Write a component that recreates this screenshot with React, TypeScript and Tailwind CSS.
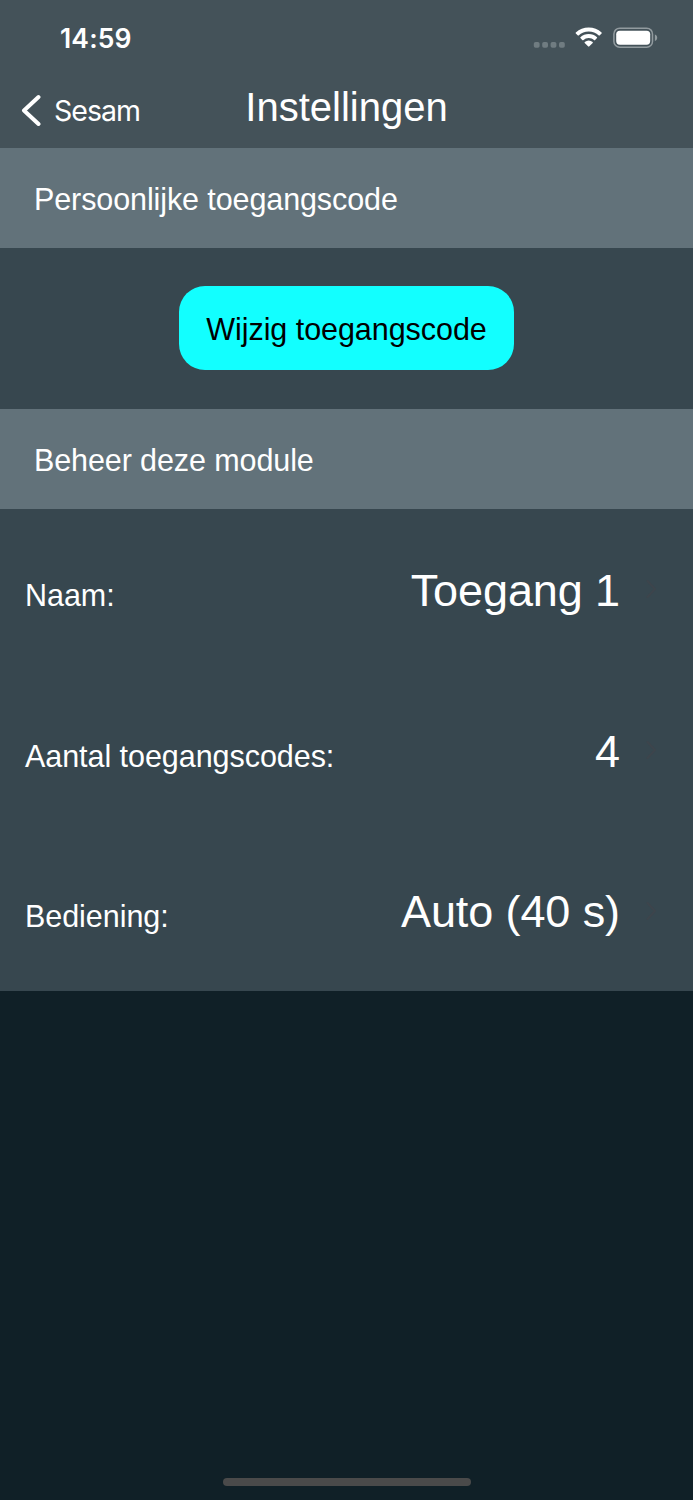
import type { ReactNode } from "react";

type Setting = {
  label: string;
  value: string;
};

const settings: Setting[] = [
  { label: "Naam:", value: "Toegang 1" },
  { label: "Aantal toegangscodes:", value: "4" },
  { label: "Bediening:", value: "Auto (40 s)" }
];

function StatusIcons() {
  return (
    <svg width="126" height="24" viewBox="0 0 126 24" fill="none">
      {/* no cellular signal */}
      <g fill="#707c81">
        <rect x="1.8" y="16" width="5.8" height="5.8" rx="1.8" />
        <rect x="10.2" y="16" width="5.8" height="5.8" rx="1.8" />
        <rect x="18.6" y="16" width="5.8" height="5.8" rx="1.8" />
        <rect x="27" y="16" width="5.8" height="5.8" rx="1.8" />
      </g>
      <g fill="#fff">
        <path d="M56.7 5.5c3.8 0 7.4 1.5 10.1 4 .2.2.5.2.7 0l2.1-2.1c.2-.2.2-.6 0-.8a19 19 0 0 0-25.8 0c-.2.2-.2.6 0 .8l2.1 2.1c.2.2.5.2.7 0 2.7-2.5 6.3-4 10.1-4Z" />
        <path d="M56.7 12.1c2.1 0 4 .8 5.5 2.1.2.2.5.2.7 0l2.1-2.1c.2-.2.2-.6 0-.8a12.2 12.2 0 0 0-16.6 0c-.2.2-.2.6 0 .8l2.1 2.1c.2.2.5.2.7 0a8.2 8.2 0 0 1 5.5-2.1Z" />
        <path d="M60.7 16.9c.2-.2.2-.6 0-.8a6.2 6.2 0 0 0-8 0c-.2.2-.2.6 0 .8l3.6 3.6c.2.2.6.2.8 0Z" />
      </g>
      <rect x="81.9" y="2.2" width="38.6" height="19" rx="5.8" stroke="#929b9f" strokeWidth="1.5" />
      <rect x="84.2" y="4.7" width="34" height="14" rx="3.6" fill="#fff" />
      <path d="M122.9 8.5c1.5.6 2.3 1.8 2.3 3.2s-.8 2.6-2.3 3.2Z" fill="#929b9f" />
    </svg>
  );
}

function SectionHeader({ children }: { children: ReactNode }) {
  return (
    <h2 className="flex h-full items-center bg-[#62727a] pt-[3px] pl-[34px] text-[30.5px] leading-none tracking-[-0.1px]">
      {children}
    </h2>
  );
}

function SettingRow({ label, value }: Setting) {
  return (
    <button
      type="button"
      className="flex h-full w-full items-center pr-[36px] pl-[25px] text-left"
    >
      <span className="flex w-[595px] items-baseline justify-between pt-2">
        <span className="text-[30.5px] tracking-[-0.05px]">{label}</span>
        <span className="text-[45px] leading-none tracking-[-0.1px]">{value}</span>
      </span>
      <svg width="12" height="22" viewBox="0 0 12 22" fill="none" className="ml-auto">
        <path d="m2.5 3 7.5 8-7.5 8" stroke="#3d454c" strokeWidth="2" strokeLinecap="round" strokeLinejoin="round" />
      </svg>
    </button>
  );
}

export default function App() {
  return (
    <main className="flex h-[1500px] w-[693px] flex-col overflow-hidden bg-[#102027] font-['Liberation_Sans',Arial,sans-serif] text-white">
      <header className="h-[148px] bg-[#445259]">
        <div className="flex h-[76px] items-center justify-between pr-[35px] pl-[60px]">
          <time className="pt-px font-['Inter',sans-serif] text-[26.5px] leading-none font-semibold tracking-[0.15px]">
            14:59
          </time>
          <StatusIcons />
        </div>
        <div className="grid h-[68px] grid-cols-[1fr_auto_1fr] items-center">
          <button
            type="button"
            className="flex items-center gap-3 pl-[21px] font-['Inter',sans-serif] text-[28.5px] tracking-[-1px]"
          >
            <svg width="21" height="32" viewBox="0 0 21 32" fill="none">
              <path d="M17.5 3 3 16.5 17.5 30" stroke="currentColor" strokeWidth="4" strokeLinecap="round" strokeLinejoin="round" />
            </svg>
            <span className="pt-0.5">Sesam</span>
          </button>
          <h1 className="pb-1.5 text-[40px] leading-none">Instellingen</h1>
        </div>
      </header>

      <div className="h-[100px]">
        <SectionHeader>Persoonlijke toegangscode</SectionHeader>
      </div>
      <div className="flex h-[160.5px] items-center justify-center bg-[#37474f]">
        <button
          type="button"
          className="h-[84px] w-[335px] rounded-[26px] bg-[#12ffff] pt-[3px] text-[30.5px] tracking-[-0.05px] text-black"
        >
          Wijzig toegangscode
        </button>
      </div>

      <div className="h-[100.5px]">
        <SectionHeader>Beheer deze module</SectionHeader>
      </div>
      <ul className="grid h-[482px] grid-rows-3 bg-[#37474f]">
        {settings.map((setting) => (
          <li key={setting.label}>
            <SettingRow {...setting} />
          </li>
        ))}
      </ul>

      <div className="mx-auto mt-auto mb-[14px] h-2 w-[248px] rounded-full bg-[#4a4a4a]" />
    </main>
  );
}
